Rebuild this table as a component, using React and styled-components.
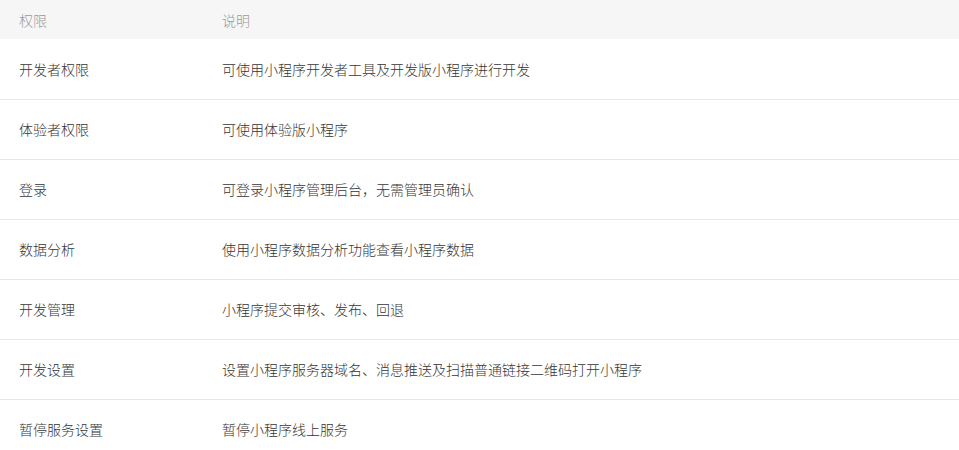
import React from "react";
import styled, { createGlobalStyle } from "styled-components";

const Global = createGlobalStyle`
  html, body { margin: 0; padding: 0; background: #fff; }
  body { font-family: "Noto Sans CJK SC", "Noto Sans", sans-serif; }
`;

const Table = styled.table`
  width: 959px;
  border-collapse: collapse;
  table-layout: fixed;
  font-size: 14px;
  font-weight: 300;
`;

const HeadRow = styled.tr`
  background: #f6f6f6;
  height: 39px;
`;

const Th = styled.th`
  text-align: left;
  font-weight: 300;
  color: #9a9a9a;
  padding: 0 0 0 ${(p) => (p.$first ? "19px" : "0")};
  width: ${(p) => (p.$first ? "222px" : "auto")};
  box-sizing: border-box;
  vertical-align: middle;
`;

const Row = styled.tr`
  height: 60px;
  border-bottom: 1px solid #e6e6e6;
  &:last-child { border-bottom: none; }
`;

const Td = styled.td`
  color: #353535;
  padding: 0 0 0 ${(p) => (p.$first ? "19px" : "0")};
  vertical-align: middle;
`;

const rows = [
  ["开发者权限", "可使用小程序开发者工具及开发版小程序进行开发"],
  ["体验者权限", "可使用体验版小程序"],
  ["登录", "可登录小程序管理后台，无需管理员确认"],
  ["数据分析", "使用小程序数据分析功能查看小程序数据"],
  ["开发管理", "小程序提交审核、发布、回退"],
  ["开发设置", "设置小程序服务器域名、消息推送及扫描普通链接二维码打开小程序"],
  ["暂停服务设置", "暂停小程序线上服务"],
];

export default function App() {
  return (
    <>
      <Global />
      <Table>
        <thead>
          <HeadRow>
            <Th $first>权限</Th>
            <Th>说明</Th>
          </HeadRow>
        </thead>
        <tbody>
          {rows.map(([a, b]) => (
            <Row key={a}>
              <Td $first>{a}</Td>
              <Td>{b}</Td>
            </Row>
          ))}
        </tbody>
      </Table>
    </>
  );
}
